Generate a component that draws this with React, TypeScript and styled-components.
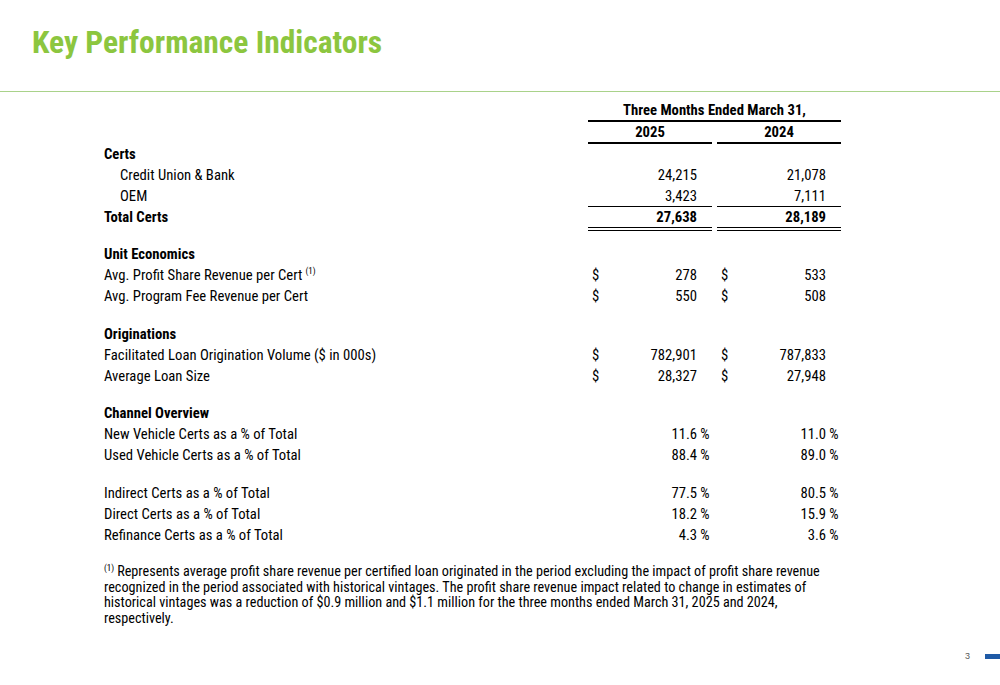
import React from "react";
import styled, { createGlobalStyle } from "styled-components";

const Global = createGlobalStyle`
  html, body { margin: 0; padding: 0; background: #ffffff; }
  body {
    font-family: "Roboto Condensed", "Roboto", "Liberation Sans", Arial, sans-serif;
    font-stretch: condensed;
    color: #000;
  }
`;

const Page = styled.div`
  width: 1000px;
  height: 685px;
  display: flex;
  flex-direction: column;
  overflow: hidden;
`;

const Header = styled.header`
  height: 92px;
  box-sizing: border-box;
  padding: 27px 0 0 32px;
  border-bottom: 1.5px solid #a9d28a;
`;

const Title = styled.h1`
  margin: 0;
  font-size: 31.5px;
  line-height: 32px;
  font-weight: 700;
  color: #8cc63f;
`;

const Content = styled.main`
  padding: 8px 0 0 104px;
`;

const Table = styled.div`
  display: grid;
  grid-template-columns: 479px 124px 124px;
  column-gap: 5px;
  width: 737px;
  font-size: 14.7px;
`;

const HeadSpan = styled.div`
  grid-column: 2 / span 2;
  text-align: center;
  font-weight: 700;
  height: 20px;
  line-height: 20px;
  border-bottom: 2px solid #000;
`;

const HeadYear = styled.div`
  text-align: center;
  font-weight: 700;
  height: 20px;
  line-height: 20px;
  border-bottom: 2px solid #000;
`;

const Label = styled.div<{ $bold?: boolean; $indent?: boolean }>`
  height: 21px;
  line-height: 21px;
  font-weight: ${(p) => (p.$bold ? 700 : 400)};
  padding-left: ${(p) => (p.$indent ? "16px" : "0")};
  white-space: nowrap;
`;

const Cell = styled.div<{ $bold?: boolean; $top?: boolean; $double?: boolean }>`
  box-sizing: border-box;
  height: ${(p) => (p.$double ? "25px" : "21px")};
  line-height: 21px;
  display: flex;
  align-items: flex-start;
  font-weight: ${(p) => (p.$bold ? 700 : 400)};
  padding-left: 4px;
  border-top: ${(p) => (p.$top ? "1px solid #000" : "none")};
  margin-top: ${(p) => (p.$top ? "-1px" : "0")};
  border-bottom: ${(p) => (p.$double ? "4px double #000" : "none")};
`;

const Dollar = styled.span`
  width: 10px;
`;

const Num = styled.span`
  flex: 1;
  text-align: right;
`;

const Suffix = styled.span`
  width: 15px;
  flex: none;
  white-space: pre;
`;

const Spacer = styled.div<{ $h: number }>`
  grid-column: 1 / -1;
  height: ${(p) => p.$h}px;
`;

const Sup = styled.span`
  font-size: 9px;
  line-height: 0;
  vertical-align: 6px;
  margin-left: 3px;
`;

const Footnote = styled.p`
  margin: 18px 0 0 0;
  width: 728px;
  font-size: 14.2px;
  line-height: 15.7px;
`;

const FootSup = styled.span`
  display: inline-block;
  font-size: 9px;
  line-height: 9px;
  vertical-align: top;
  margin-right: 3px;
`;

const Footer = styled.footer`
  margin-top: auto;
  height: 10px;
  margin-bottom: 24px;
  display: flex;
  justify-content: flex-end;
  align-items: center;
  gap: 15px;
`;

const PageNum = styled.span`
  font-family: "Liberation Sans", Arial, sans-serif;
  font-stretch: normal;
  font-size: 9px;
  color: #595959;
`;

const Bar = styled.span`
  width: 15px;
  height: 5px;
  background: #1f5aa6;
`;

type V = { d?: boolean; v: string; s?: string };
type Row =
  | { kind: "head"; label: string }
  | { kind: "item"; label: string; indent?: boolean; sup?: boolean; a?: V; b?: V }
  | { kind: "total"; label: string; a: V; b: V }
  | { kind: "gap"; h: number };

const rows: Row[] = [
  { kind: "head", label: "Certs" },
  { kind: "item", label: "Credit Union & Bank", indent: true, a: { v: "24,215" }, b: { v: "21,078" } },
  { kind: "item", label: "OEM", indent: true, a: { v: "3,423" }, b: { v: "7,111" } },
  { kind: "total", label: "Total Certs", a: { v: "27,638" }, b: { v: "28,189" } },
  { kind: "gap", h: 13 },
  { kind: "head", label: "Unit Economics" },
  { kind: "item", label: "Avg. Profit Share Revenue per Cert", sup: true, a: { d: true, v: "278" }, b: { d: true, v: "533" } },
  { kind: "item", label: "Avg. Program Fee Revenue per Cert", a: { d: true, v: "550" }, b: { d: true, v: "508" } },
  { kind: "gap", h: 17 },
  { kind: "head", label: "Originations" },
  { kind: "item", label: "Facilitated Loan Origination Volume ($ in 000s)", a: { d: true, v: "782,901" }, b: { d: true, v: "787,833" } },
  { kind: "item", label: "Average Loan Size", a: { d: true, v: "28,327" }, b: { d: true, v: "27,948" } },
  { kind: "gap", h: 16 },
  { kind: "head", label: "Channel Overview" },
  { kind: "item", label: "New Vehicle Certs as a % of Total", a: { v: "11.6", s: " %" }, b: { v: "11.0", s: " %" } },
  { kind: "item", label: "Used Vehicle Certs as a % of Total", a: { v: "88.4", s: " %" }, b: { v: "89.0", s: " %" } },
  { kind: "gap", h: 17 },
  { kind: "item", label: "Indirect Certs as a % of Total", a: { v: "77.5", s: " %" }, b: { v: "80.5", s: " %" } },
  { kind: "item", label: "Direct Certs as a % of Total", a: { v: "18.2", s: " %" }, b: { v: "15.9", s: " %" } },
  { kind: "item", label: "Refinance Certs as a % of Total", a: { v: "4.3", s: " %" }, b: { v: "3.6", s: " %" } },
];

const ValueCell: React.FC<{ val?: V; bold?: boolean; top?: boolean; double?: boolean }> = ({ val, bold, top, double }) => (
  <Cell $bold={bold} $top={top} $double={double}>
    <Dollar>{val?.d ? "$" : ""}</Dollar>
    <Num>{val?.v ?? ""}</Num>
    <Suffix>{val?.s ?? ""}</Suffix>
  </Cell>
);

export default function App() {
  return (
    <Page>
      <Global />
      <Header>
        <Title>Key Performance Indicators</Title>
      </Header>
      <Content>
        <Table>
          <div />
          <HeadSpan>Three Months Ended March 31,</HeadSpan>
          <div />
          <HeadYear>2025</HeadYear>
          <HeadYear>2024</HeadYear>
          {rows.map((r, i) => {
            if (r.kind === "gap") return <Spacer key={i} $h={r.h} />;
            if (r.kind === "head")
              return (
                <React.Fragment key={i}>
                  <Label $bold>{r.label}</Label>
                  <ValueCell />
                  <ValueCell />
                </React.Fragment>
              );
            if (r.kind === "total")
              return (
                <React.Fragment key={i}>
                  <Label $bold>{r.label}</Label>
                  <ValueCell val={r.a} bold top double />
                  <ValueCell val={r.b} bold top double />
                </React.Fragment>
              );
            return (
              <React.Fragment key={i}>
                <Label $indent={r.indent}>
                  {r.label}
                  {r.sup && <Sup>(1)</Sup>}
                </Label>
                <ValueCell val={r.a} />
                <ValueCell val={r.b} />
              </React.Fragment>
            );
          })}
        </Table>
        <Footnote>
          <FootSup>(1)</FootSup>
          Represents average profit share revenue per certified loan originated in the period excluding the impact of profit share revenue recognized in the period associated with historical vintages. The profit share revenue impact related to change in estimates of historical vintages was a reduction of $0.9 million and $1.1 million for the three months ended March 31, 2025 and 2024, respectively.
        </Footnote>
      </Content>
      <Footer>
        <PageNum>3</PageNum>
        <Bar />
      </Footer>
    </Page>
  );
}
